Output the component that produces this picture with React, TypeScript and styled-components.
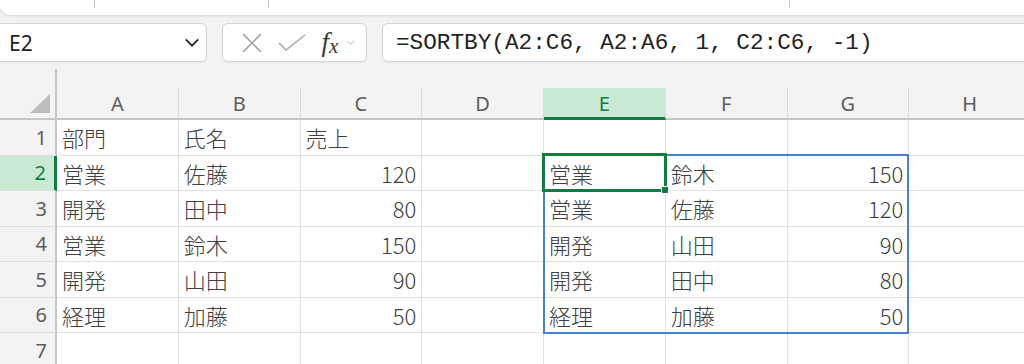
import React from 'react';
import styled, { createGlobalStyle } from 'styled-components';

const GlobalStyle = createGlobalStyle`
  html, body { margin: 0; padding: 0; }
  body {
    background: #f3f3f3;
    overflow: hidden;
    font-family: "Noto Sans", "Noto Sans CJK JP", sans-serif;
  }
`;

const Screen = styled.div`
  width: 1024px;
  height: 364px;
  overflow: hidden;
  background: #f3f3f3;
  display: flex;
  flex-direction: column;
`;

const Ribbon = styled.div`
  flex-shrink: 0;
  height: 15px;
  margin-right: -20px;
  background: #fff;
  border-radius: 0 0 10px 10px;
  box-shadow: 0 1px 3px rgba(0, 0, 0, 0.14);
  display: flex;
`;

const RibbonGroup = styled.div<{ $w: number; $last?: boolean }>`
  width: ${p => p.$w}px;
  flex-shrink: 0;
  height: 8px;
  border-right: ${p => (p.$last ? 'none' : '1px solid #c4c4c4')};
`;

const FormulaBar = styled.div`
  flex-shrink: 0;
  display: flex;
  gap: 15px;
  height: 39px;
  margin: 8px -20px 0 -8px;
`;

const Box = styled.div`
  box-sizing: border-box;
  background: #fff;
  border: 1px solid #d4d4d4;
  border-radius: 6px;
  box-shadow: 0 1px 1px rgba(0, 0, 0, 0.05);
  display: flex;
  align-items: center;
`;

const NameBox = styled(Box)`
  width: 215px;
  padding: 0 6px 0 16px;
  justify-content: space-between;
  font-family: "Noto Sans", sans-serif;
  font-size: 21px;
  color: #222;
`;

const ButtonsBox = styled(Box)`
  width: 145px;
  padding: 0 6px 0 14px;
`;

const IconSlot = styled.span<{ $w: number }>`
  width: ${p => p.$w}px;
  display: flex;
  align-items: center;
  justify-content: center;
`;

const Fx = styled.span`
  font-family: "Liberation Serif", serif;
  font-style: italic;
  font-size: 27px;
  color: #3a3a3a;
  line-height: 1;
  & sub {
    font-size: 21px;
    vertical-align: -2px;
  }
`;

const FormulaInput = styled(Box)`
  flex: 1;
  padding-left: 13px;
  font-family: "Liberation Mono", monospace;
  font-size: 22.7px;
  color: #222;
  white-space: nowrap;
`;

const Splitter = styled.div`
  flex-shrink: 0;
  height: 26px;
  display: flex;
  align-items: flex-end;
`;

const SplitterLine = styled.div`
  width: 55px;
  height: 19px;
  border-right: 2px solid #c6c6c6;
`;

const Sheet = styled.div`
  flex-shrink: 0;
  display: grid;
  grid-template-columns: 57px repeat(8, 121.75px);
  grid-template-rows: 32px repeat(7, 35.5px);
`;

const Placed = styled.div<{ $row: number; $col: number }>`
  box-sizing: border-box;
  grid-row: ${p => p.$row};
  grid-column: ${p => p.$col};
`;

const Corner = styled(Placed)`
  border-right: 2px solid #c6c6c6;
  border-bottom: 2px solid #c6c6c6;
  display: flex;
  align-items: flex-end;
  justify-content: flex-end;
  padding: 0 5px 5px 0;
`;

const Triangle = styled.div`
  width: 0;
  height: 0;
  border-left: 20px solid transparent;
  border-bottom: 19px solid #bdbdbd;
`;

const ColHeader = styled(Placed)<{ $active?: boolean }>`
  display: flex;
  align-items: center;
  justify-content: center;
  font-family: "Noto Sans", sans-serif;
  font-size: 20px;
  color: ${p => (p.$active ? '#107c41' : '#5c5c5c')};
  background: ${p => (p.$active ? '#c9e9d5' : '#f3f3f3')};
  border-right: 1px solid #dcdcdc;
  border-bottom: 2px solid ${p => (p.$active ? '#107c41' : '#c6c6c6')};
  box-shadow: ${p => (p.$active ? 'inset 0 -1px 0 #107c41' : 'none')};
`;

const RowHeader = styled(Placed)<{ $active?: boolean }>`
  display: flex;
  align-items: center;
  justify-content: flex-end;
  padding-right: 8px;
  font-family: "Noto Sans", sans-serif;
  font-size: 20px;
  color: ${p => (p.$active ? '#107c41' : '#5c5c5c')};
  background: ${p => (p.$active ? '#c9e9d5' : '#f3f3f3')};
  border-right: ${p => (p.$active ? '3px solid #107c41' : '2px solid #c6c6c6')};
  border-bottom: 1px solid #dedede;
`;

const Cell = styled(Placed)<{ $num?: boolean }>`
  background: #fff;
  display: flex;
  align-items: center;
  justify-content: ${p => (p.$num ? 'flex-end' : 'flex-start')};
  padding: 0 5px;
  font-family: "Noto Sans CJK JP", sans-serif;
  font-weight: 300;
  font-size: 22px;
  color: #404040;
  border-right: 1px solid #e1e1e1;
  border-bottom: 1px solid #e1e1e1;
  white-space: nowrap;
  overflow: hidden;
`;

const SpillRange = styled.div`
  grid-column: 6 / 9;
  grid-row: 3 / 8;
  margin: -1.5px 0 -1px -1px;
  border: 2px solid #4a7fd6;
  pointer-events: none;
  z-index: 1;
`;

const ActiveCell = styled.div`
  grid-column: 6 / 7;
  grid-row: 3 / 4;
  margin: -2.5px -1.5px -1px -2px;
  border: 3px solid #107c41;
  position: relative;
  pointer-events: none;
  z-index: 2;
`;

const FillHandle = styled.div`
  position: absolute;
  right: -5px;
  bottom: -5px;
  width: 6px;
  height: 6px;
  background: #107c41;
  border: 1px solid #fff;
`;

const COLS = ['A', 'B', 'C', 'D', 'E', 'F', 'G', 'H'];

type Value = string | number | undefined;

const source: Value[][] = [
  ['部門', '氏名', '売上'],
  ['営業', '佐藤', 120],
  ['開発', '田中', 80],
  ['営業', '鈴木', 150],
  ['開発', '山田', 90],
  ['経理', '加藤', 50],
];

// =SORTBY(A2:C6, A2:A6, 1, C2:C6, -1) spilled from E2
const sorted: Value[][] = [
  ['営業', '鈴木', 150],
  ['営業', '佐藤', 120],
  ['開発', '山田', 90],
  ['開発', '田中', 80],
  ['経理', '加藤', 50],
];

function valueAt(row: number, col: number): Value {
  if (col < 3) return source[row - 1]?.[col];
  if (col >= 4 && col <= 6 && row >= 2) return sorted[row - 2]?.[col - 4];
  return undefined;
}

const CrossIcon = () => (
  <svg width="22" height="22" viewBox="0 0 22 22">
    <path d="M2 2 L20 20 M20 2 L2 20" stroke="#9c9c9c" strokeWidth="1.5" fill="none" />
  </svg>
);

const CheckIcon = () => (
  <svg width="28" height="18" viewBox="0 0 28 18">
    <path d="M1 9 L8 16 L27 1" stroke="#a6a6a6" strokeWidth="1.5" fill="none" />
  </svg>
);

const ChevronDown = ({ size, color, width }: { size: number; color: string; width: number }) => (
  <svg width={size} height={size * 0.6} viewBox="0 0 16 10">
    <path d="M1.5 1.5 L8 8 L14.5 1.5" stroke={color} strokeWidth={width} fill="none" />
  </svg>
);

export default function App() {
  const rows = [1, 2, 3, 4, 5, 6, 7];

  return (
    <>
      <GlobalStyle />
      <Screen>
        <Ribbon>
          <RibbonGroup $w={94} />
          <RibbonGroup $w={173} />
          <RibbonGroup $w={520} />
          <RibbonGroup $w={260} $last />
        </Ribbon>

        <FormulaBar>
          <NameBox>
            <span>E2</span>
            <ChevronDown size={16} color="#2b2b2b" width={2} />
          </NameBox>
          <ButtonsBox>
            <IconSlot $w={30}><CrossIcon /></IconSlot>
            <IconSlot $w={50}><CheckIcon /></IconSlot>
            <IconSlot $w={26}><Fx>f<sub>x</sub></Fx></IconSlot>
            <IconSlot $w={14}><ChevronDown size={9} color="#a8a8a8" width={1.5} /></IconSlot>
          </ButtonsBox>
          <FormulaInput>=SORTBY(A2:C6, A2:A6, 1, C2:C6, -1)</FormulaInput>
        </FormulaBar>

        <Splitter><SplitterLine /></Splitter>

        <Sheet>
          <Corner $row={1} $col={1}><Triangle /></Corner>
          {COLS.map((c, ci) => (
            <ColHeader key={c} $row={1} $col={ci + 2} $active={c === 'E'}>{c}</ColHeader>
          ))}
          {rows.map(r => (
            <React.Fragment key={r}>
              <RowHeader $row={r + 1} $col={1} $active={r === 2}>{r}</RowHeader>
              {COLS.map((c, ci) => {
                const v = valueAt(r, ci);
                return (
                  <Cell key={c} $row={r + 1} $col={ci + 2} $num={typeof v === 'number'}>{v}</Cell>
                );
              })}
            </React.Fragment>
          ))}
          <SpillRange />
          <ActiveCell><FillHandle /></ActiveCell>
        </Sheet>
      </Screen>
    </>
  );
}
